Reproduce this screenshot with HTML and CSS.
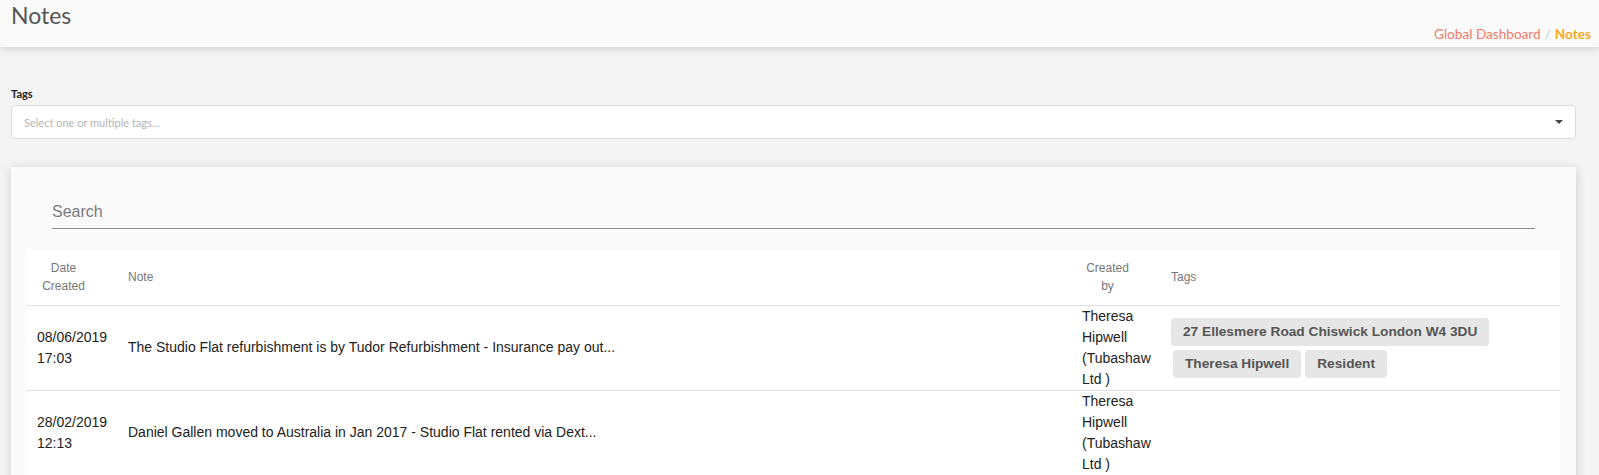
FILE: index.html
```html
<!DOCTYPE html>
<html lang="en">
<head>
<meta charset="utf-8">
<title>Notes</title>
<link rel="stylesheet" href="styles.css">
</head>
<body>
<header class="topbar">
  <h1 class="title">Notes</h1>
  <nav class="crumbs">
    <a class="crumb-link">Global Dashboard</a>
    <span class="crumb-sep">/</span>
    <span class="crumb-current">Notes</span>
  </nav>
</header>
<main class="content">
  <div class="field">
    <label class="field-label">Tags</label>
    <div class="select">
      <span class="placeholder">Select one or multiple tags...</span>
      <span class="caret"></span>
    </div>
  </div>
  <section class="card">
    <div class="search"><span class="search-text">Search</span></div>
    <table class="notes">
      <thead>
        <tr>
          <th class="col-date th-center">Date Created</th>
          <th class="col-note">Note</th>
          <th class="col-by th-center">Created by</th>
          <th class="col-tags">Tags</th>
        </tr>
      </thead>
      <tbody>
        <tr>
          <td class="col-date"><span class="line">08/06/2019</span><span class="line">17:03</span></td>
          <td class="col-note">The Studio Flat refurbishment is by Tudor Refurbishment - Insurance pay out...</td>
          <td class="col-by">Theresa Hipwell (Tubashaw Ltd )</td>
          <td class="col-tags">
            <div class="chips">
              <span class="chip">27 Ellesmere Road Chiswick London W4 3DU</span>
              <span class="chip">Theresa Hipwell</span>
              <span class="chip">Resident</span>
            </div>
          </td>
        </tr>
        <tr>
          <td class="col-date"><span class="line">28/02/2019</span><span class="line">12:13</span></td>
          <td class="col-note">Daniel Gallen moved to Australia in Jan 2017 - Studio Flat rented via Dext...</td>
          <td class="col-by">Theresa Hipwell (Tubashaw Ltd )</td>
          <td class="col-tags"></td>
        </tr>
      </tbody>
    </table>
  </section>
</main>
</body>
</html>
```
FILE: styles.css
```css
html, body {
  margin: 0;
  padding: 0;
}
body {
  background: #f4f4f4;
  font-family: "Liberation Sans", Arial, sans-serif;
  color: #333;
}
.topbar {
  height: 47px;
  box-sizing: border-box;
  background: #fafafa;
  display: flex;
  justify-content: space-between;
  align-items: flex-end;
  padding: 0 8px 5px 11px;
  box-shadow: 0 2px 8px rgba(0, 0, 0, 0.14);
  position: relative;
  z-index: 1;
}
.title {
  align-self: flex-start;
  margin: 0;
  padding-top: 1px;
  font-family: Lato, sans-serif;
  font-weight: 400;
  font-size: 23px;
  line-height: 28px;
  color: #555;
}
.crumbs {
  font-family: Lato, sans-serif;
  font-size: 13.6px;
  line-height: 16px;
  display: flex;
  gap: 4px;
}
.crumb-link {
  color: #f27b6b;
}
.crumb-sep {
  color: #ccc;
}
.crumb-current {
  color: #f6a823;
  font-weight: 700;
}
.content {
  padding: 40px 23px 0 11px;
}
.field-label {
  display: block;
  font-family: Lato, sans-serif;
  font-size: 11px;
  font-weight: 700;
  line-height: 13px;
  color: #222;
  margin-bottom: 5px;
}
.select {
  height: 34px;
  box-sizing: border-box;
  background: #fff;
  border: 1px solid #dcdcdc;
  border-radius: 4px;
  display: flex;
  align-items: center;
  justify-content: space-between;
  padding: 0 12px 0 12px;
}
.placeholder {
  font-family: Lato, sans-serif;
  font-size: 11px;
  color: #b5b5b5;
}
.caret {
  width: 0;
  height: 0;
  border-left: 4px solid transparent;
  border-right: 4px solid transparent;
  border-top: 4px solid #444;
}
.card {
  margin-top: 28px;
  background: #fafafa;
  padding: 16px 16px 20px 16px;
  box-shadow: 0 2px 10px rgba(0, 0, 0, 0.16);
  min-height: 400px;
}
.search {
  margin: 0 25px;
  padding: 19px 0 6px 0;
  border-bottom: 1px solid #8a8a8a;
}
.search-text {
  display: block;
  font-size: 16px;
  line-height: 20px;
  color: #7a7a7a;
}
.notes {
  margin-top: 20px;
  width: 100%;
  table-layout: fixed;
  border-collapse: collapse;
  background: #fff;
  font-size: 14px;
}
.notes th,
.notes td {
  box-sizing: border-box;
}
.notes th {
  height: 56px;
  font-weight: 400;
  font-size: 12px;
  line-height: 18px;
  color: #777;
  text-align: left;
  vertical-align: middle;
  padding: 0 10px;
  border-bottom: 1px solid #e2e2e2;
}
.notes th.th-center {
  text-align: center;
  padding-right: 28px;
}
.notes td {
  line-height: 21px;
  padding: 0 10px;
  vertical-align: middle;
  color: #222;
  border-bottom: 1px solid #dedede;
}
.col-date {
  width: 91px;
}
.notes td.col-date {
  padding-right: 4px;
}
.col-by {
  width: 89px;
}
.notes td.col-by {
  padding-right: 7px;
}
.col-tags {
  width: 399px;
}
.line {
  display: block;
}
.chips {
  display: flex;
  flex-wrap: wrap;
  gap: 4px 4px;
  padding: 10px 0;
}
.chip {
  display: inline-block;
  background: #e6e6e6;
  color: #555;
  font-weight: 700;
  font-size: 13.7px;
  line-height: 28px;
  height: 28px;
  padding: 0 12px;
  border-radius: 4px;
}
.chip + .chip {
  margin-left: 2px;
}
.chip + .chip + .chip {
  margin-left: 0;
}
```
